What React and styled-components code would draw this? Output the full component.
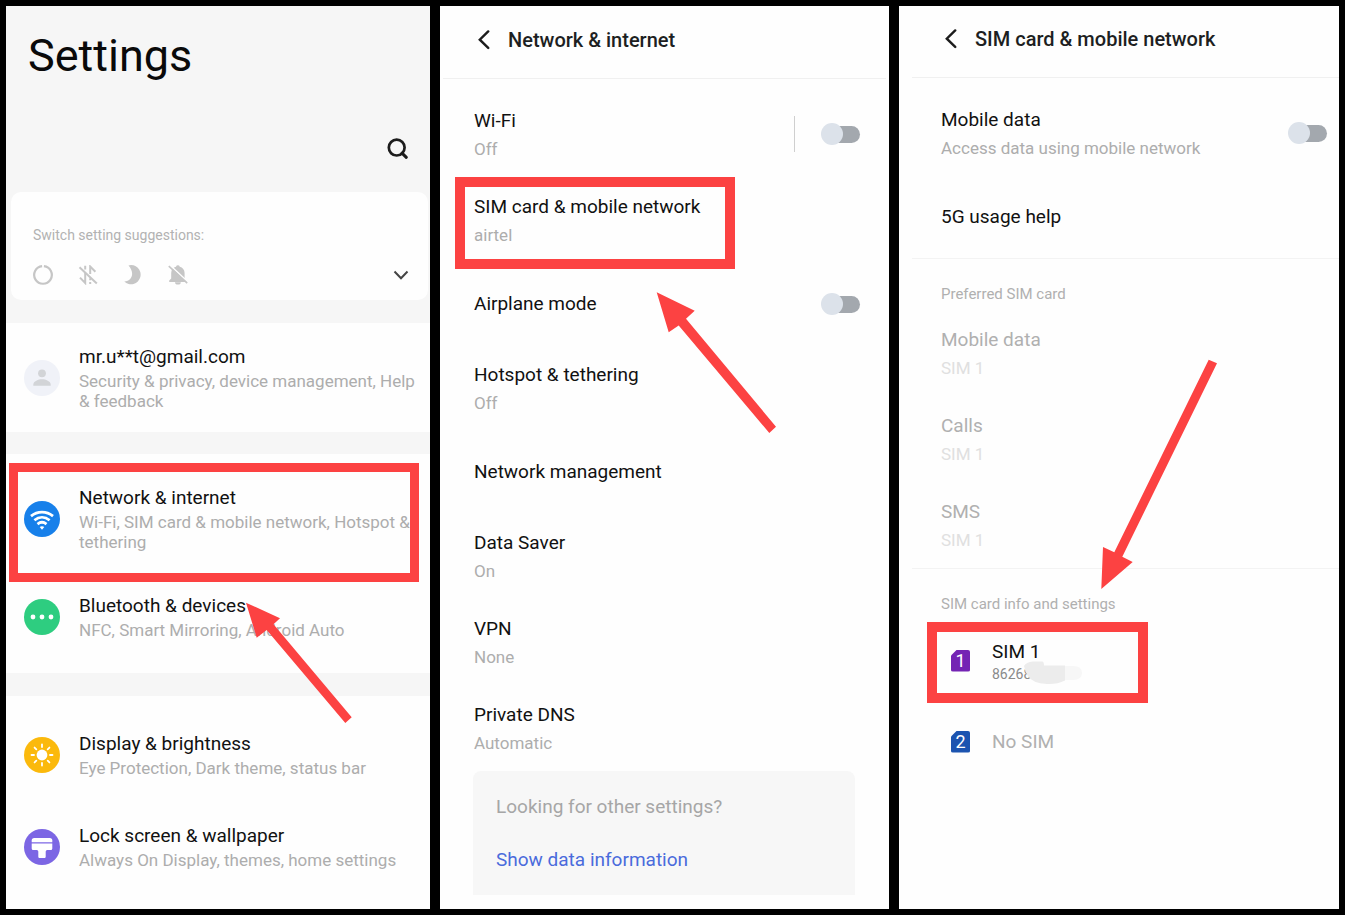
import styled, { createGlobalStyle } from 'styled-components'

const GlobalStyle = createGlobalStyle`
  * {
    box-sizing: border-box;
  }
  body {
    margin: 0;
    background: #000;
    color: #111;
    font-family: Roboto, 'Noto Sans', sans-serif;
  }
  h1, h2, h3, p, ul {
    margin: 0;
    padding: 0;
  }
`

const Board = styled.main`
  display: grid;
  grid-template-columns: 424fr 449fr 440fr;
  gap: 10px;
  min-height: 100vh;
  padding: 6px;
  background: #000;
`
const Screen = styled.section`
  position: relative;
  display: flex;
  flex-direction: column;
  min-width: 0;
  background: ${(props) => props.$bg || '#fefefe'};
`

/* annotations */
const Highlight = styled.div`
  position: absolute;
  pointer-events: none;
  border: ${(props) => props.$border || 10}px solid #fc4242;
`
const NetworkHighlight = styled(Highlight)`
  top: -23px;
  bottom: -30px;
  left: 3px;
  right: 11px;
`
const MobileHighlight = styled(Highlight)`
  top: 0;
  left: 15px;
  width: 280px;
  height: 92px;
`
const SimHighlight = styled(Highlight)`
  top: 2px;
  left: 28px;
  width: 221px;
  height: 81px;
`
const ArrowSvg = styled.svg`
  position: absolute;
  top: ${(props) => props.$top}px;
  left: ${(props) => props.$left}px;
  fill: #fc4242;
  pointer-events: none;
`

/* main settings screen */
const TopBar = styled.header`
  display: flex;
  flex-direction: column;
  padding: 23px 20px 31px 22px;
`
const PageTitle = styled.h1`
  font-size: 45px;
  line-height: 54px;
  font-weight: 400;
  color: #0a0a0a;
`
const IconButton = styled.button`
  display: flex;
  align-items: center;
  justify-content: center;
  padding: 0;
  border: 0;
  background: none;
  color: ${(props) => props.$color || '#1c1c1c'};
  cursor: pointer;
`
const SearchButton = styled(IconButton)`
  align-self: flex-end;
  width: 24px;
  height: 24px;
  margin-top: 54px;
`
const Suggestions = styled.div`
  margin: 0 2px 23px 5px;
  padding: 35px 19px 15px 22px;
  border-radius: 10px;
  background: #fefefe;
`
const SuggestionsLabel = styled.p`
  font-size: 14px;
  line-height: 16px;
  color: #b2b2b2;
`
const SuggestionsBar = styled.div`
  display: flex;
  align-items: center;
  gap: 25px;
  margin-top: 22px;
`
const ExpandButton = styled(IconButton)`
  width: 16px;
  height: 20px;
  margin-left: auto;
`
const Group = styled.ul`
  display: flex;
  flex-direction: column;
  gap: ${(props) => props.$gap || 0}px;
  padding: ${(props) => props.$pad};
  margin-bottom: ${(props) => props.$after || 0}px;
  flex-grow: ${(props) => (props.$fill ? 1 : 0)};
  list-style: none;
  background: #fefefe;
`
const Item = styled.li`
  position: relative;
`
const ItemLink = styled.a`
  display: flex;
  align-items: center;
  gap: 19px;
  padding: 0 12px 0 18px;
  color: inherit;
  text-decoration: none;
`
const Badge = styled.svg`
  flex: none;
  width: 36px;
  height: 36px;
  border-radius: 50%;
  background: ${(props) => props.$bg};
`
const ItemText = styled.span`
  display: flex;
  flex-direction: column;
  gap: 2px;
`
const Title = styled.span`
  display: block;
  font-size: 19px;
  line-height: 24px;
  color: ${(props) => (props.$muted ? '#b0b0b0' : '#111')};
`
const Sub = styled.span`
  display: block;
  font-size: 17px;
  line-height: 20px;
  color: ${(props) => (props.$muted ? '#e0e0e0' : '#adadad')};
`

/* sub screens */
const SubHeader = styled.header`
  display: flex;
  align-items: center;
  gap: 18px;
  margin: ${(props) => props.$margin};
  padding: ${(props) => props.$pad};
  border-bottom: 1px solid #f0f0f0;
`
const SubTitle = styled.h2`
  font-size: 20px;
  line-height: 24px;
  font-weight: 500;
  color: #1d1f22;
`
const BackButton = styled(IconButton)`
  width: 12px;
  height: 20px;
`
const List = styled.ul`
  padding: ${(props) => props.$pad || 0};
  list-style: none;
`
const Line = styled.li`
  position: relative;
  display: flex;
  align-items: center;
  min-height: ${(props) => (props.$tall ? 86 : 82)}px;
  padding: 0 ${(props) => props.$right}px 0 ${(props) => props.$left}px;
`
const LineText = styled.a`
  display: flex;
  flex: 1;
  flex-direction: column;
  gap: 6px;
  color: inherit;
  text-decoration: none;
`
const Splitter = styled.span`
  width: 1px;
  height: 36px;
  margin-right: 26px;
  background: #cfcfcf;
`
const Switch = styled.input`
  appearance: none;
  display: grid;
  align-items: center;
  width: 39px;
  height: 22px;
  margin: 0;
  cursor: pointer;

  &::before,
  &::after {
    content: '';
    grid-area: 1 / 1;
  }
  &::before {
    justify-self: end;
    width: 34px;
    height: 17px;
    border-radius: 9px;
    background: #a3a8ae;
  }
  &::after {
    width: 22px;
    height: 22px;
    border-radius: 50%;
    background: #dce2ea;
  }
  &:checked::after {
    justify-self: end;
  }
`
const MoreCard = styled.aside`
  display: flex;
  flex-direction: column;
  align-items: flex-start;
  gap: 29px;
  margin: 0 34px 14px 33px;
  padding: 24px 23px 23px;
  border-radius: 8px 8px 0 0;
  background: #f7f7f7;
  font-size: 19px;
  line-height: 24px;
  color: #a6a6a6;
`
const MoreLink = styled.a`
  color: #4a6bdc;
  text-decoration: none;
`
const Divider = styled.hr`
  height: 1px;
  margin: 0 0 0 13px;
  border: 0;
  background: #f3f3f3;
`
const SectionLabel = styled.h3`
  padding: 25px 42px 6px;
  font-size: 15px;
  line-height: 20px;
  font-weight: 400;
  color: #b0b0b0;
`
const SimRow = styled.li`
  position: relative;
  display: flex;
  align-items: center;
  gap: 22px;
  min-height: 81px;
  padding: 0 52px;
`
const SimCard = styled.span`
  width: 19px;
  height: 22px;
  border-radius: 2px;
  clip-path: polygon(6px 0, 100% 0, 100% 100%, 0 100%, 0 6px);
  background: ${(props) => props.$bg};
  font-size: 18px;
  line-height: 22px;
  text-align: center;
  color: #fff;
`
const SimNumber = styled.span`
  position: relative;
  font-size: 14px;
  line-height: 16px;
  color: #8a8a8a;
`
const Smudge = styled.svg`
  position: absolute;
  top: -5px;
  left: 31px;
`

const Arrow = ({ top, left, width, height, points }) => (
  <ArrowSvg
    $top={top}
    $left={left}
    width={width}
    height={height}
    viewBox={`0 0 ${width} ${height}`}
    aria-hidden="true"
  >
    <polygon points={points} />
  </ArrowSvg>
)

const SearchIcon = () => (
  <svg width="24" height="24" viewBox="0 0 24 24" fill="none" stroke="currentColor">
    <circle cx="10.7" cy="10.6" r="7.9" strokeWidth="2.7" />
    <path d="M16 16.2l4.3 4.1" strokeWidth="3.1" strokeLinecap="round" />
  </svg>
)

const DownIcon = () => (
  <svg width="16" height="20" viewBox="0 0 16 20" fill="none" stroke="currentColor">
    <path d="M1.5 6.500l6.500 6.700 6.500-6.700" strokeWidth="2" />
  </svg>
)

const BackIcon = () => (
  <svg width="12" height="20" viewBox="0 0 12 20" fill="none" stroke="currentColor">
    <path d="M10.2 1.4L1.800 9.700l8.400 8.200" strokeWidth="2.4" strokeLinecap="round" />
  </svg>
)

const QuickIcons = () => (
  <>
    <svg width="20" height="20" viewBox="0 0 20 20" fill="none" stroke="#c6c6c6" strokeWidth="2.2">
      <path d="M10.9 1.200A8.800 8.800 0 1 1 9.100 1.200" />
    </svg>
    <svg width="20" height="20" viewBox="0 0 20 20" fill="none" stroke="#c6c6c6" strokeWidth="2">
      <path d="M7.200.8v3.600M7.200 8v10L2 12.600M12.200 18.900v-2M12.200 15.200v-2M12.200 9V1.500l5.200 5.300" />
      <path d="M1.500 2.300l17.300 16.200" />
    </svg>
    <svg width="20" height="20" viewBox="0 0 20 20" fill="#c6c6c6">
      <path d="M5.500.4A9.600 9.600 0 1 1 1.300 16.500C10 16 11.500 7 5.500.4z" />
    </svg>
    <svg width="20" height="20" viewBox="0 0 20 20">
      <path
        d="M1.200 17v-1.500l2-2V8c0-3.200 2-5.500 4.800-6.300a2 2 0 0 1 3.800 0c2.800.8 4.800 3.100 4.800 6.300v5.500l2 2V17z"
        fill="#c6c6c6"
      />
      <path d="M7 17.200h5.800a2.900 2.400 0 0 1-5.800 0z" fill="#c6c6c6" />
      <path d="M2 .2l18.500 17.300" stroke="#fefefe" strokeWidth="1.600" />
      <path d="M.8 1.200l18.400 17" stroke="#c6c6c6" strokeWidth="1.600" />
    </svg>
  </>
)

const AvatarIcon = () => (
  <Badge $bg="#f0f2f8" viewBox="0 0 36 36" fill="#d2d4d7">
    <circle cx="18" cy="13.300" r="3.900" />
    <path d="M9.300 25.700v-1c0-3.500 5-5.400 8.700-5.400s8.700 1.900 8.700 5.400v1z" />
  </Badge>
)

const WifiIcon = () => (
  <Badge $bg="#1780ea" viewBox="0 0 36 36" fill="none" stroke="#fff" strokeWidth="2.700">
    <path d="M7 15.100C13.500 9.700 22.500 9.700 29 15.100" />
    <path d="M10.400 19.200C15 15.400 21 15.400 25.600 19.200" />
    <path d="M13.500 23.100C16.200 20.900 19.800 20.900 22.500 23.100" />
    <path d="M15.700 26c1.300-1.100 3.300-1.100 4.600 0L18 28.700z" fill="#fff" stroke="none" />
  </Badge>
)

const DotsIcon = () => (
  <Badge $bg="#2ecd80" viewBox="0 0 36 36" fill="#fff">
    <circle cx="9" cy="18" r="2.400" />
    <circle cx="18" cy="18" r="2.400" />
    <circle cx="27" cy="18" r="2.400" />
  </Badge>
)

const SunIcon = () => (
  <Badge $bg="#fbb90c" viewBox="0 0 36 36" fill="#fff">
    <circle cx="18" cy="18" r="5.400" />
    {[0, 45, 90, 135, 180, 225, 270, 315].map((deg) => (
      <path
        key={deg}
        d="M18 10V7.500"
        stroke="#fff"
        strokeWidth="1.800"
        strokeLinecap="round"
        transform={`rotate(${deg} 18 18)`}
      />
    ))}
  </Badge>
)

const BrushIcon = () => (
  <Badge $bg="#7c66e4" viewBox="0 0 36 36" fill="#fff">
    <path d="M7.700 13.200v-1.700A2.500 2.500 0 0 1 10.200 9h15.600a2.500 2.500 0 0 1 2.500 2.500v1.700z" />
    <path d="M7.700 14.400h20.600v5.100a1.500 1.500 0 0 1-1.500 1.500h-3.600a1.500 1.500 0 0 0-1.500 1.500v5.300a1.200 1.200 0 0 1-1.200 1.200h-5a1.200 1.200 0 0 1-1.200-1.200v-5.300a1.500 1.500 0 0 0-1.500-1.500H9.200a1.500 1.500 0 0 1-1.500-1.500z" />
  </Badge>
)

const SettingItem = ({ icon, title, sub, children }) => (
  <Item>
    <ItemLink href="#">
      {icon}
      <ItemText>
        <Title>{title}</Title>
        <Sub>{sub}</Sub>
      </ItemText>
    </ItemLink>
    {children}
  </Item>
)

const SettingLine = ({ id, title, sub, muted, split, left = 34, right = 29, children }) => (
  <Line $tall={!!sub} $left={left} $right={right}>
    <LineText {...(id ? { as: 'label', htmlFor: id } : { href: '#' })}>
      <Title $muted={muted}>{title}</Title>
      {sub && <Sub $muted={muted}>{sub}</Sub>}
    </LineText>
    {split && <Splitter />}
    {id && <Switch type="checkbox" role="switch" id={id} />}
    {children}
  </Line>
)

const SettingsScreen = () => (
  <Screen $bg="#f6f6f6">
    <TopBar>
      <PageTitle>Settings</PageTitle>
      <SearchButton aria-label="Search">
        <SearchIcon />
      </SearchButton>
    </TopBar>
    <Suggestions>
      <SuggestionsLabel>Switch setting suggestions:</SuggestionsLabel>
      <SuggestionsBar>
        <QuickIcons />
        <ExpandButton $color="#444" aria-label="Expand">
          <DownIcon />
        </ExpandButton>
      </SuggestionsBar>
    </Suggestions>
    <Group $pad="22px 0 21px" $after={22}>
      <SettingItem
        icon={<AvatarIcon />}
        title="mr.u**t@gmail.com"
        sub="Security & privacy, device management, Help & feedback"
      />
    </Group>
    <Group $pad="32px 0 33px" $gap={42} $after={23}>
      <SettingItem
        icon={<WifiIcon />}
        title="Network & internet"
        sub="Wi-Fi, SIM card & mobile network, Hotspot & tethering"
      >
        <NetworkHighlight $border={9} />
      </SettingItem>
      <SettingItem
        icon={<DotsIcon />}
        title="Bluetooth & devices"
        sub="NFC, Smart Mirroring, Android Auto"
      />
    </Group>
    <Group $pad="36px 0" $gap={46} $fill>
      <SettingItem
        icon={<SunIcon />}
        title="Display & brightness"
        sub="Eye Protection, Dark theme, status bar"
      />
      <SettingItem
        icon={<BrushIcon />}
        title="Lock screen & wallpaper"
        sub="Always On Display, themes, home settings"
      />
    </Group>
    <Arrow
      top={596}
      left={240}
      width={106}
      height={122}
      points="0,0.7 34,16.3 27.5,22.2 105.7,115.3 99.3,121 20.7,28 10.7,35.7"
    />
  </Screen>
)

const NetworkScreen = () => (
  <Screen>
    <SubHeader $margin="0 3px" $pad="22px 35px 26px">
      <BackButton aria-label="Back">
        <BackIcon />
      </BackButton>
      <SubTitle>Network &amp; internet</SubTitle>
    </SubHeader>
    <List $pad="12px 0 0">
      <SettingLine id="wifi" title="Wi-Fi" sub="Off" split />
      <SettingLine title="SIM card & mobile network" sub="airtel">
        <MobileHighlight />
      </SettingLine>
      <SettingLine id="airplane" title="Airplane mode" />
      <SettingLine title="Hotspot & tethering" sub="Off" />
      <SettingLine title="Network management" />
      <SettingLine title="Data Saver" sub="On" />
      <SettingLine title="VPN" sub="None" />
      <SettingLine title="Private DNS" sub="Automatic" />
    </List>
    <MoreCard>
      <p>Looking for other settings?</p>
      <MoreLink href="#">Show data information</MoreLink>
    </MoreCard>
    <Arrow
      top={286}
      left={216}
      width={120}
      height={142}
      points="0.7,0.3 38.7,18.7 30,26.7 120,134.7 113.3,141 22.7,33.5 12.7,40.3"
    />
  </Screen>
)

const SimScreen = () => (
  <Screen>
    <SubHeader $margin="0 0 0 13px" $pad="21px 33px 26px">
      <BackButton aria-label="Back">
        <BackIcon />
      </BackButton>
      <SubTitle>SIM card &amp; mobile network</SubTitle>
    </SubHeader>
    <List $pad="12px 0 0">
      <SettingLine
        id="mobile-data"
        title="Mobile data"
        sub="Access data using mobile network"
        left={42}
        right={12}
      />
      <SettingLine title="5G usage help" left={42} />
    </List>
    <Divider />
    <SectionLabel>Preferred SIM card</SectionLabel>
    <List>
      <SettingLine title="Mobile data" sub="SIM 1" left={42} muted />
      <SettingLine title="Calls" sub="SIM 1" left={42} muted />
      <SettingLine title="SMS" sub="SIM 1" left={42} muted />
    </List>
    <Divider />
    <SectionLabel>SIM card info and settings</SectionLabel>
    <List>
      <SimRow>
        <SimCard $bg="#7424b4">1</SimCard>
        <ItemText>
          <Title>SIM 1</Title>
          <SimNumber>
            86268
            <Smudge width="60" height="25" viewBox="0 0 60 25" aria-hidden="true">
              <path d="M36 5h14q9 0 9 7t-9 7H36z" fill="#f7f7f7" />
              <path d="M1 5Q3 1 10 .5h9q2 0 2 4h21v15q-8 4-18 3.500Q9 22 5 15 2 11 1 5z" fill="#ececec" />
            </Smudge>
          </SimNumber>
        </ItemText>
        <SimHighlight />
      </SimRow>
      <SimRow>
        <SimCard $bg="#1c54b0">2</SimCard>
        <Title $muted>No SIM</Title>
      </SimRow>
    </List>
    <Arrow
      top={353}
      left={202}
      width={116}
      height={230}
      points="0.3,230 31.7,203 21.3,197.7 116,4.3 107.7,0.7 13.3,193.3 2,188"
    />
  </Screen>
)

const App = () => {
  return (
    <>
      <GlobalStyle />
      <Board>
        <SettingsScreen />
        <NetworkScreen />
        <SimScreen />
      </Board>
    </>
  )
}

export default App
